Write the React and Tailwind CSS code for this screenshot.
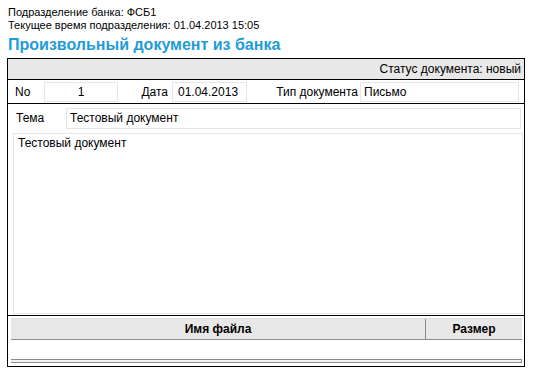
export default function App() {
  return (
    <div className="w-[534px] h-[371px] bg-white text-black overflow-hidden font-['Liberation_Sans',Arial,sans-serif]">
      <div className="pl-[8px] pt-[6px] text-[11px] leading-[13px]">
        <div>Подразделение банка: ФСБ1</div>
        <div>Текущее время подразделения: 01.04.2013 15:05</div>
      </div>
      <h1 className="pl-[8px] mt-[1px] text-[16px] leading-[24px] font-bold text-[#1e9cd7]">
        Произвольный документ из банка
      </h1>

      {/* document frame */}
      <div className="ml-[7px] mt-[1px] w-[518px] border border-black text-[12px]">
        {/* status bar */}
        <div className="h-[21px] bg-[#e8e8e8] border-b border-black pr-[3px] pt-[1px] text-right leading-[19px]">
          Статус документа: новый
        </div>

        {/* number / date / type */}
        <div className="h-[24px] border-b border-black flex items-start pt-[2px] pl-[7px] leading-[20px]">
          <span className="w-[29px]">No</span>
          <div className="w-[74px] h-[20px] border border-[#e6e6e6] text-center leading-[18px]">1</div>
          <span className="w-[54px] text-right pr-[4px]">Дата</span>
          <div className="w-[75px] h-[20px] border border-[#e6e6e6] pl-[5px] leading-[18px]">01.04.2013</div>
          <span className="w-[113px] text-right pr-[2px]">Тип документа</span>
          <div className="w-[159px] h-[20px] border border-[#e6e6e6] pl-[3px] leading-[18px]">Письмо</div>
        </div>

        {/* subject + body */}
        <div className="border-b border-black pt-[4px] pb-[1px]">
          <div className="flex items-start leading-[21px]">
            <span className="w-[58px] pl-[8px]">Тема</span>
            <div className="w-[455px] h-[21px] border border-[#e6e6e6] pl-[3px] leading-[19px]">Тестовый документ</div>
          </div>
          <div className="ml-[5px] mt-[4px] w-[510px] h-[181px] border border-[#e6e6e6] pl-[4px] pt-[2px] leading-[14px]">
            Тестовый документ
          </div>
        </div>

        {/* attachments */}
        <div className="pl-[3px] pr-[2px] pt-[2px] pb-[3px]">
          <div className="w-[511px]">
            <div className="h-[22px] flex bg-[#e8e8e8] border-t border-[#dcdcdc] border-b border-b-[#8c8c8c] font-bold">
              <div className="w-[414px] text-center pt-[1px] leading-[19px]">Имя файла</div>
              <div className="flex-1 border-l border-[#8c8c8c] text-center pt-[1px] leading-[19px]">Размер</div>
            </div>
            <div className="h-[19px] flex">
              <div className="w-[414px]"></div>
              <div className="flex-1"></div>
            </div>
            <div className="h-[4px] border-t border-b border-[#8c8c8c] border-r bg-[#f2f2f2]"></div>
          </div>
        </div>
      </div>
    </div>
  )
}
